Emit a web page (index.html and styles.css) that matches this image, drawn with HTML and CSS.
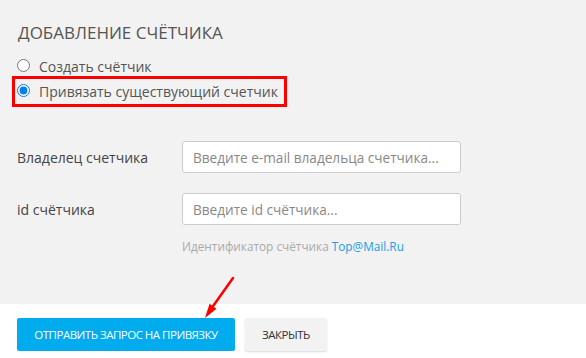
FILE: index.html
```html
<!DOCTYPE html>
<html lang="ru">
<head>
    <meta charset="UTF-8">
    <meta name="viewport" content="width=device-width, initial-scale=1.0">
    <title>Добавление счётчика</title>
    <link rel="stylesheet" href="styles.css">
</head>
<body>

    <div class="panel">
        <h2 class="title">Добавление счётчика</h2>

        <div class="radio-group">
            <label class="radio-row">
                <input type="radio" name="mode" class="radio">
                <span>Создать счётчик</span>
            </label>
            <label class="radio-row highlight">
                <input type="radio" name="mode" class="radio" checked>
                <span>Привязать существующий счетчик</span>
            </label>
        </div>

        <div class="form">
            <div class="form-row">
                <span class="form-label">Владелец счетчика</span>
                <input type="text" class="input-field" placeholder="Введите e-mail владельца счетчика...">
            </div>
            <div class="form-row">
                <span class="form-label">id счётчика</span>
                <input type="text" class="input-field" placeholder="Введите id счётчика...">
            </div>
            <div class="hint">Идентификатор счётчика <a href="#" class="hint-link">Top@Mail.Ru</a></div>
        </div>
    </div>

    <div class="footer">
        <button class="btn btn-primary">Отправить запрос на привязку</button>
        <button class="btn btn-secondary">Закрыть</button>
    </div>

    <svg class="arrow" width="586" height="358" viewBox="0 0 586 358">
        <line x1="233" y1="278" x2="211" y2="309" stroke="#f00" stroke-width="2.5" stroke-linecap="round"/>
        <polygon points="205,318 209.5,303.8 216.5,308.8" fill="#f00"/>
    </svg>

</body>
</html>
```

FILE: styles.css
```css
body {
    font-family: "Open Sans", "DejaVu Sans", sans-serif;
    margin: 0;
    padding: 0;
    background-color: #fff;
    color: #444;
    position: relative;
    width: 586px;
    height: 358px;
    overflow: hidden;
}

.panel {
    background: #f2f2f2;
    height: 304px;
    box-sizing: border-box;
    padding: 21px 0 0 18px;
}

.title {
    margin: 0;
    font-size: 17px;
    font-weight: normal;
    line-height: 23px;
    text-transform: uppercase;
    color: #555;
}

.radio-group {
    margin-top: 10px;
    margin-left: -3px;
}

.radio-row {
    display: flex;
    align-items: center;
    width: fit-content;
    height: 25px;
    padding: 0 6px 0 2px;
    font-size: 14px;
    color: #555;
    cursor: pointer;
}

.radio-row.highlight {
    outline: 3px solid #f00;
    outline-offset: 0;
}

.radio {
    width: 13px;
    height: 13px;
    margin: 0 9px 2px 0;
    accent-color: #0a7cf0;
}

.form {
    margin-top: 37px;
    margin-left: -1px;
}

.form-row {
    display: flex;
    align-items: center;
    margin-bottom: 20px;
}

.form-label {
    width: 165px;
    font-size: 14px;
    color: #444;
}

.input-field {
    width: 279px;
    height: 32px;
    box-sizing: border-box;
    padding: 0 10px;
    border: 1px solid #ccc;
    border-radius: 3px;
    background: #fff;
    font-family: inherit;
    font-size: 13.6px;
    color: #444;
}

.input-field::placeholder {
    color: #888;
}

.hint {
    margin-left: 165px;
    margin-top: -7px;
    font-size: 11.8px;
    color: #aaa;
}

.hint-link {
    color: #1a9ee6;
    text-decoration: none;
}

.footer {
    display: flex;
    gap: 10px;
    padding: 14px 0 0 17px;
}

.btn {
    height: 33px;
    padding: 0 8px;
    border: none;
    border-radius: 2px;
    font-family: inherit;
    font-size: 11.5px;
    letter-spacing: -0.5px;
    text-transform: uppercase;
    cursor: pointer;
}

.btn-primary {
    width: 218px;
    background-color: #00abee;
    color: #fff;
}

.btn-secondary {
    width: 82px;
    background-color: #f2f2f2;
    color: #333;
    box-shadow: 0 1px 2px rgba(0, 0, 0, 0.15);
}

.arrow {
    position: absolute;
    left: 0;
    top: 0;
    pointer-events: none;
}
```
